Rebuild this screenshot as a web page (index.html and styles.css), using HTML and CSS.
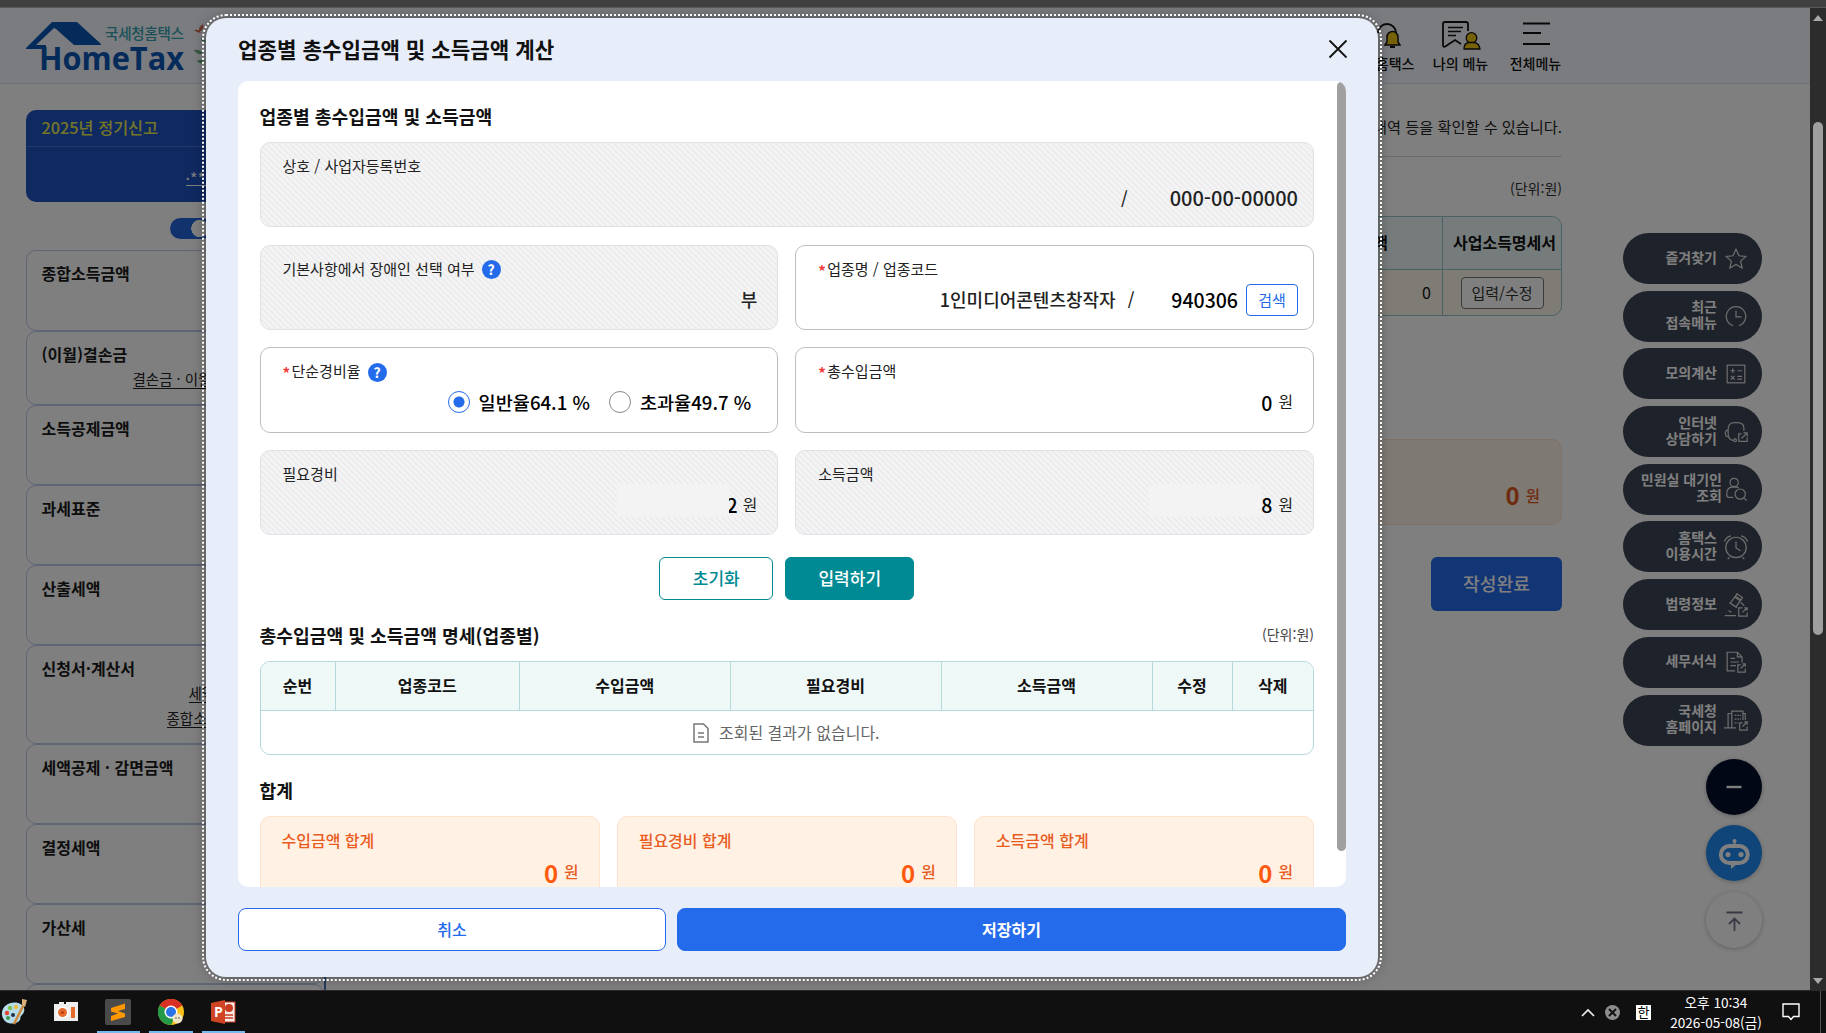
FILE: index.html
```html
<!DOCTYPE html>
<html lang="ko">
<head>
  <meta charset="UTF-8">
  <meta name="viewport" content="width=device-width, initial-scale=1.0">
  <title>업종별 총수입금액 및 소득금액 계산</title>
  <link rel="stylesheet" href="styles.css">
</head>
<body>
  <div class="browser-edge"></div>
  <div class="viewport">
    <div class="page">
      <header class="header">
        <svg class="logo" width="190" height="60" viewBox="0 0 190 60">
          <path d="M0 32 L26 6 H51 L75 28 V29 H48 L30 13 L28 12 L10 29 H20 V33 H0z" fill="#0a56b4"/>
          <text x="79" y="23" class="logo-kr" textLength="79">국세청홈택스</text>
          <text x="13" y="54" class="logo-en" textLength="145" lengthAdjust="spacingAndGlyphs">HomeTax</text>
          <path d="M168 14 q5 -1 7 3 q-4 0 -7 -3z M173 16 q-1 -5 4 -8 q2 5 -4 8z" fill="#d66a4a"/>
          <path d="M168 34 q6 -1 9 4 q-6 1 -9 -4z M171 45 q4 -3 8 1 q-5 3 -8 -1z M175 22 q3 0 5 4 q-5 0 -5 -4z" fill="#69ad7c"/>
        </svg>
        <nav class="top-nav">
          <a class="top-link">
            <svg width="40" height="32" viewBox="0 0 40 32">
              <path d="M12 14 a9 9 0 0 1 18 0" fill="none" stroke="#111" stroke-width="2"/>
              <path d="M19 26 h15 l-2 -3 v-5 a5.500 5.500 0 0 0 -11 0 v5z" fill="#ecc413" stroke="#111" stroke-width="1.500"/>
              <path d="M24 28 h5" stroke="#111" stroke-width="2"/>
            </svg>
            <span>My홈택스</span>
          </a>
          <a class="top-link">
            <svg width="40" height="32" viewBox="0 0 40 32">
              <path d="M27 12 V5 q0 -2 -2 -2 H4 q-2 0 -2 2 V26 q0 3 3 1 l9 -6 l6 4" fill="none" stroke="#111" stroke-width="1.800"/>
              <path d="M7 8.500 h15 M7 12.500 h13 M7 16.500 h8" stroke="#111" stroke-width="1.600"/>
              <circle cx="30.500" cy="19" r="5.300" fill="#ecc413" stroke="#111" stroke-width="1.300"/>
              <path d="M23 30 q0 -6 5 -6.500 h5 q5 0.500 6 6.500z" fill="#ecc413" stroke="#111" stroke-width="1.300"/>
            </svg>
            <span>나의 메뉴</span>
          </a>
          <a class="top-link">
            <svg width="40" height="32" viewBox="0 0 40 32">
              <path d="M7 4.500 h27 M7 14 h18 M7 25 h27" stroke="#111" stroke-width="1.900"/>
            </svg>
            <span>전체메뉴</span>
          </a>
        </nav>
      </header>

      <div class="body">
        <aside class="sidebar">
          <div class="report-card">
            <div class="report-title">2025년 정기신고</div>
            <div class="report-name"><span>·*****</span></div>
          </div>
          <div class="switch-row"><span class="switch"></span></div>
          <ul class="steps">
            <li class="step">종합소득금액</li>
            <li class="step step-short">(이월)결손금<div class="step-links links-loss"><a>결손금 · 이월결손금</a></div></li>
            <li class="step">소득공제금액</li>
            <li class="step">과세표준</li>
            <li class="step">산출세액</li>
            <li class="step step-tall">신청서·계산서<div class="step-links links-form"><a class="link-in">세액공제신청</a><a>종합소득세신고</a></div></li>
            <li class="step">세액공제 · 감면금액</li>
            <li class="step">결정세액</li>
            <li class="step">가산세</li>
            <li class="step"></li>
          </ul>
        </aside>

        <main class="content">
          <p class="guide">내역 등을 확인할 수 있습니다.</p>
          <div class="unit">(단위:원)</div>
          <div class="biz-table">
            <div class="biz-row biz-head"><span class="biz-amount">금액</span><span class="biz-detail">사업소득명세서</span></div>
            <div class="biz-row"><span class="biz-amount">0</span><span class="biz-detail"><button class="btn-edit">입력/수정</button></span></div>
          </div>
          <div class="total-box"><b>0</b><span>원</span></div>
          <button class="btn-done">작성완료</button>
        </main>
      </div>

      <div class="quick">
        <a class="quick-item"><span>즐겨찾기</span>
          <svg viewBox="0 0 28 28"><path d="M14 3.500 l3.200 7 7.300 .8 -5.500 5 1.600 7.400 -6.600 -3.800 -6.600 3.800 1.600 -7.400 -5.500 -5 7.300 -.8z"/></svg></a>
        <a class="quick-item"><span>최근<br>접속메뉴</span>
          <svg viewBox="0 0 28 28"><path d="M17 24.500 a10.500 10.500 0 1 0 -6 0 M14 8 v7 h6"/></svg></a>
        <a class="quick-item"><span>모의계산</span>
          <svg viewBox="0 0 28 28"><rect x="4.500" y="4.500" width="19" height="19"/><path d="M8 10.500 h5 M10.500 8 v5 M15.500 10.500 h5 M8.500 16 l4 4 M12.500 16 l-4 4 M15.500 16.500 h5 M15.500 19.500 h5"/></svg></a>
        <a class="quick-item"><span>인터넷<br>상담하기</span>
          <svg viewBox="0 0 28 28"><path d="M22.500 13 v-3 q0 -6 -7 -6 h-3 q-7 0 -7 7 v4 q0 8 6 8 M5.500 12 q-3 0 -3 3 q0 4 3 4"/><circle cx="13" cy="23" r="1.500"/><path d="M20 16 h-3 v8 h9 v-4 M20 21 l6 -6 M22 15 h4 v4"/></svg></a>
        <a class="quick-item quick-wide"><span>민원실 대기인<br>조회</span>
          <svg viewBox="0 0 28 28"><circle cx="12" cy="7" r="4.500"/><path d="M11 23 H6 q-2 0 -2 -3 q0 -8 6 -8 h4 q2 0 3 1"/><circle cx="18.500" cy="19.500" r="5.500"/><path d="M22.500 23.500 l3 3"/></svg></a>
        <a class="quick-item"><span>홈택스<br>이용시간</span>
          <svg viewBox="0 0 28 28"><circle cx="14" cy="14.500" r="11"/><path d="M14 8 v7 l5 3 M1.500 8 q2 -5 7 -6 M26.500 8 q-2 -5 -7 -6 M7 25 l-2 2 M21 25 l2 2"/></svg></a>
        <a class="quick-item"><span>법령정보</span>
          <svg viewBox="0 0 28 28"><path d="M15 2 l6 4 -1.500 2.500 -6 -4z M12.500 5.500 l6 4 -4.500 6.500 -6 -4z M7 11.500 l8 5.500 M19 11 l4 4 M2 25.500 h12 M6 20 l3 2"/><path d="M21 17 h-4 v9 h9 v-4 M21 22 l5 -5 M23 17 h3 v3"/></svg></a>
        <a class="quick-item"><span>세무서식</span>
          <svg viewBox="0 0 28 28"><path d="M13 23.500 H4.500 V3.500 h11 l5 5 v6 M15.500 3.500 v5 h5 M8 10 h5 M8 14 h9 M8 18 h6"/><path d="M19 17 h-3 v8 h8 v-4 M19 21 l5 -5 M21 16 h3 v3"/></svg></a>
        <a class="quick-item"><span>국세청<br>홈페이지</span>
          <svg viewBox="0 0 28 28"><path d="M1 22.500 h13 M5.500 22 V7 h4 M9.500 22 V4.500 h12 V14 M21.500 7 h2.500 v7"/><path d="M12.500 9 h7 M12.500 13 h7 M12.500 17 h4" stroke-dasharray="2 1"/><path d="M21 17 h-3 v8 h8 v-4 M21 21 l5 -5 M23 16 h3 v3"/></svg></a>
        <a class="round round-dark"><svg viewBox="0 0 56 56"><path d="M20.500 28 h15" stroke="#fff" stroke-width="2.400"/></svg></a>
        <a class="round round-chat">
          <svg viewBox="0 0 56 56"><rect x="14.800" y="21" width="27" height="17" rx="8.500" fill="none" stroke="#fff" stroke-width="4"/><circle cx="28.500" cy="16" r="2" fill="#fff"/><path d="M28.500 16 v4" stroke="#fff" stroke-width="2"/><circle cx="22" cy="29.500" r="2.600" fill="#fff"/><circle cx="35" cy="29.500" r="2.600" fill="#fff"/><path d="M25 39 v5 l6 -5z" fill="#fff"/></svg></a>
        <a class="round round-top"><svg viewBox="0 0 56 56"><path d="M20.500 20.500 h16 M28.500 39 v-11 M23 32 l5.500 -5.500 5.500 5.500" fill="none" stroke="#75758a" stroke-width="1.800"/></svg></a>
      </div>
      <div class="dim"></div>

      <section class="modal">
        <div class="modal-head">
          <h1>업종별 총수입금액 및 소득금액 계산</h1>
          <svg class="close" width="20" height="20" viewBox="0 0 20 20"><path d="M1.500 1.500 L18.500 18.500 M18.500 1.500 L1.500 18.500" stroke="#111" stroke-width="1.800"/></svg>
        </div>

        <div class="modal-body">
          <h2>업종별 총수입금액 및 소득금액</h2>
          <div class="form-grid">
            <div class="field field-full disabled">
              <div class="label">상호 / 사업자등록번호</div>
              <div class="value value-biz"><i class="slash">/</i><span class="num">000-00-00000</span></div>
            </div>
            <div class="field disabled">
              <div class="label">기본사항에서 장애인 선택 여부 <span class="help">?</span></div>
              <div class="value">부</div>
            </div>
            <div class="field">
              <div class="label"><em>*</em>업종명 / 업종코드</div>
              <div class="value value-code"><span>1인미디어콘텐츠창작자</span><i class="slash">/</i><span class="num">940306</span><button class="btn-search">검색</button></div>
            </div>
            <div class="field">
              <div class="label"><em>*</em>단순경비율 <span class="help">?</span></div>
              <div class="value value-radio">
                <span class="radio on"></span><span class="rate">일반율64.1 %</span>
                <span class="radio"></span><span class="rate">초과율49.7 %</span>
              </div>
            </div>
            <div class="field">
              <div class="label"><em>*</em>총수입금액</div>
              <div class="value"><span class="num">0</span><small>원</small></div>
            </div>
            <div class="field disabled">
              <div class="label">필요경비</div>
              <div class="value"><span class="num num-cut">2</span><span class="blank blank-over"></span><small>원</small></div>
            </div>
            <div class="field disabled">
              <div class="label">소득금액</div>
              <div class="value"><span class="blank"></span><span class="num">8</span><small>원</small></div>
            </div>
          </div>

          <div class="form-buttons">
            <button class="btn-reset">초기화</button>
            <button class="btn-enter">입력하기</button>
          </div>

          <div class="list-head">
            <h2>총수입금액 및 소득금액 명세(업종별)</h2>
            <span class="list-unit">(단위:원)</span>
          </div>
          <div class="list">
            <div class="list-row">
              <span>순번</span><span>업종코드</span><span>수입금액</span><span>필요경비</span><span>소득금액</span><span>수정</span><span>삭제</span>
            </div>
            <div class="list-empty">
              <svg width="16" height="20" viewBox="0 0 16 20"><path d="M1 1 h9.500 l4.500 4.500 v13.500 h-14z M5 10 h6 M5 14 h6" fill="none" stroke="#777" stroke-width="1.500"/></svg>
              조회된 결과가 없습니다.
            </div>
          </div>

          <h2 class="sum-title">합계</h2>
          <div class="sums">
            <div class="sum"><div>수입금액 합계</div><p><b>0</b>원</p></div>
            <div class="sum"><div>필요경비 합계</div><p><b>0</b>원</p></div>
            <div class="sum"><div>소득금액 합계</div><p><b>0</b>원</p></div>
          </div>
          <div class="thumb"></div>
        </div>

        <div class="modal-foot">
          <button class="btn-cancel">취소</button>
          <button class="btn-save">저장하기</button>
        </div>
      </section>
    </div>
    <div class="scrollbar">
      <span class="arrow-up"></span>
      <span class="scroll-thumb"></span>
      <span class="arrow-down"></span>
    </div>
  </div>

  <footer class="taskbar">
    <div class="apps">
      <div class="app app-paint">
        <svg width="28" height="28" viewBox="0 0 28 28"><path d="M2 17 C1 8 10 3 18 5 C25 7 26 13 22 17 C19 19 22 21 18 24 C10 28 3 24 2 17z" fill="#b7dcea"/><circle cx="7" cy="15" r="2.200" fill="#e2452f"/><circle cx="10" cy="10" r="2.200" fill="#7cc24e"/><circle cx="16" cy="9" r="2.200" fill="#f1bd3b"/><circle cx="8" cy="20" r="2" fill="#3a9a4c"/><circle cx="13" cy="17" r="2" fill="#234"/><path d="M25 4 L14 26" stroke="#cf8a3b" stroke-width="2.500"/><path d="M22 1 l5 1 -2 7 -3 -2z" fill="#d9b07a"/></svg>
      </div>
      <div class="app">
        <svg width="26" height="24" viewBox="0 0 26 24"><path d="M1 4 h5 v-2 h5 v2 h2 v-2 h12 v19 h-24z" fill="#eee"/><circle cx="9.500" cy="12.500" r="6" fill="#fff"/><circle cx="9.500" cy="12.500" r="4.500" fill="#e8692c"/><circle cx="9.500" cy="12.500" r="1.500" fill="#b53c12"/><rect x="18" y="7" width="4" height="11" fill="#e8692c"/></svg>
      </div>
      <div class="app running">
        <svg width="26" height="26" viewBox="0 0 26 26"><rect width="26" height="26" rx="2" fill="#4a4a4a"/><path d="M6 9 L20 4.500 V10 L13 12 L20 14.500 V18 L6 22 V17 L13 14.500 L6 12.500z" fill="#ff9800"/></svg>
      </div>
      <div class="app running">
        <svg width="26" height="26" viewBox="0 0 26 26"><circle cx="13" cy="13" r="13" fill="#fbc116"/><path d="M13 13 L1.700 6.500 A13 13 0 0 1 24.300 6.500z" fill="#d93025"/><path d="M1.700 6.500 A13 13 0 0 0 13 26 L18.500 16z" fill="#249a48"/><circle cx="13" cy="13" r="6.500" fill="#fff"/><circle cx="13" cy="13" r="5" fill="#2b72e8"/><circle cx="19.500" cy="19.500" r="5" fill="#f3e6c5"/><circle cx="18" cy="19" r=".7" fill="#333"/><circle cx="21" cy="19" r=".7" fill="#333"/></svg>
      </div>
      <div class="app running">
        <svg width="26" height="24" viewBox="0 0 26 24"><rect x="13" y="2" width="12" height="20" fill="#f8ece9" stroke="#c83b20"/><circle cx="19" cy="8" r="4" fill="#c83b20"/><path d="M15 15 h8 M15 18 h8" stroke="#c83b20" stroke-width="1.500"/><path d="M1 3 L15 0 V24 L1 21z" fill="#cf4424"/><text x="4" y="17" class="ppt">P</text></svg>
      </div>
    </div>
    <div class="tray">
      <svg width="14" height="9" viewBox="0 0 14 9"><path d="M1 8 L7 2 L13 8" fill="none" stroke="#eee" stroke-width="1.700"/></svg>
      <svg class="tray-x" width="15" height="15" viewBox="0 0 15 15"><circle cx="7.500" cy="7.500" r="7.500" fill="#8d8d8d"/><path d="M4 4 L11 11 M11 4 L4 11" stroke="#111" stroke-width="2"/></svg>
      <span class="ime">한</span>
      <div class="clock">오후 10:34<br>2026-05-08(금)</div>
      <svg class="notice" width="18" height="18" viewBox="0 0 18 18"><path d="M1 1 H17 V13.500 H11.500 L9 16.500 L6.500 13.500 H1z" fill="none" stroke="#fff" stroke-width="1.400"/></svg>
      <span class="peek"></span>
    </div>
  </footer>
</body>
</html>
```
FILE: styles.css
```css
* {
  box-sizing: border-box;
}
body {
  margin: 0;
  width: 1826px;
  height: 1033px;
  overflow: hidden;
  display: flex;
  flex-direction: column;
  font-family: "Noto Sans CJK KR", "Noto Sans", sans-serif;
  font-size: 16px;
  line-height: 1.2;
  color: #111;
}
h1, h2, p, ul {
  margin: 0;
  padding: 0;
}
button {
  font: inherit;
  padding: 0;
  background: #fff;
}
.browser-edge {
  height: 8px;
  background: #404040;
  border-bottom: 1px solid #5a5a5a;
}
.viewport {
  height: 982px;
  display: flex;
}
.page {
  position: relative;
  width: 1810px;
  overflow: hidden;
  background: #fff;
}

/* page header */
.header {
  height: 76px;
  display: flex;
  justify-content: space-between;
  background: #f7f8ff;
  border-bottom: 1px solid #dde3e6;
  padding: 0 243px 0 26px;
}
.logo {
  margin-top: 8px;
}
.logo-kr {
  font-size: 14.5px;
  font-weight: 500;
  fill: #35a3b2;
}
.logo-en {
  font-family: "Open Sans", sans-serif;
  font-size: 32px;
  font-weight: 700;
  fill: #0a56b4;
}
.top-nav {
  display: flex;
  gap: 12px;
  padding-top: 11px;
}
.top-link {
  width: 63px;
  display: flex;
  flex-direction: column;
  align-items: center;
  font-size: 14px;
  font-weight: 500;
  line-height: 20px;
  white-space: nowrap;
}
.top-link svg {
  margin-bottom: 2px;
}

.body {
  display: flex;
  justify-content: space-between;
  padding: 26px 248px 0 25.500px;
}

/* left steps */
.sidebar {
  width: 300px;
  height: 890px;
  border-right: 2px solid #4577c8;
}
.report-card {
  height: 92px;
  border-radius: 10px 0 0 10px;
  background: #1e53c2;
}
.report-title {
  height: 37px;
  padding-left: 16px;
  line-height: 35px;
  font-size: 16.3px;
  font-weight: 500;
  color: #ebeb50;
  border-bottom: 1px solid #4470cc;
}
.report-name {
  padding: 17px 0 0 160px;
  font-size: 16px;
  line-height: 22px;
  color: #fff;
}
.report-name span {
  display: inline-block;
  height: 22px;
  line-height: 28px;
  border-bottom: 1px solid #fff;
}
.switch-row {
  height: 48px;
  padding: 16px 0 0 144px;
}
.switch {
  display: block;
  width: 42px;
  height: 21px;
  border-radius: 11px;
  background: radial-gradient(circle at 30px 50%, #fff 8.5px, #2565dc 9px);
}
.steps {
  list-style: none;
}
.step {
  height: 80px;
  padding: 11px 0 0 15px;
  border: 1px solid #bccbe8;
  border-radius: 10px;
  line-height: 22px;
  font-size: 16px;
  font-weight: 700;
  color: #1a1a1a;
}
.step:first-child {
  height: 80.5px;
}
.step-short {
  height: 74px;
}
.step-tall {
  height: 99.500px;
}
.step-links {
  display: flex;
  flex-direction: column;
  align-items: flex-start;
  font-size: 14.5px;
  font-weight: 400;
  line-height: 19px;
  color: #222;
}
.step-links a {
  border-bottom: 1px solid #222;
}
.links-loss {
  padding: 4px 0 0 91px;
}
.links-form {
  gap: 5px;
  padding: 4px 0 0 125px;
}
.link-in {
  margin-left: 22px;
}

/* right content */
.content {
  width: 260px;
  display: flex;
  flex-direction: column;
  align-items: flex-end;
}
.guide {
  width: 100%;
  height: 47px;
  padding-top: 7px;
  text-align: right;
  white-space: nowrap;
  font-size: 15.2px;
  color: #222;
  border-bottom: 1px solid #dadada;
}
.unit {
  height: 59px;
  padding-top: 23px;
  font-size: 14px;
  color: #333;
}
.biz-table {
  width: 100%;
  height: 100px;
  border: 1px solid #92c4c8;
  border-radius: 0 10px 10px 0;
  overflow: hidden;
  background: #fff8ec;
}
.biz-row {
  height: 46px;
  display: flex;
}
.biz-head {
  height: 53px;
  background: #edf8f7;
  border-bottom: 1px solid #92c4c8;
  font-weight: 700;
}
.biz-amount {
  flex: 1;
  display: flex;
  justify-content: flex-end;
  align-items: center;
  padding-right: 11px;
}
.biz-head .biz-amount {
  padding-right: 54px;
}
.biz-detail {
  width: 119px;
  display: flex;
  justify-content: center;
  align-items: center;
  padding-left: 5px;
  border-left: 1px solid #92c4c8;
  white-space: nowrap;
}
.biz-row:last-child .biz-detail {
  padding-left: 0;
}
.btn-edit {
  width: 83px;
  height: 32px;
  border: 1px solid #777;
  border-radius: 4px;
  font-size: 15px;
  color: #333;
}
.total-box {
  width: 100%;
  height: 86px;
  margin-top: 123px;
  display: flex;
  justify-content: flex-end;
  align-items: center;
  gap: 6px;
  padding: 26px 21px 0 0;
  border: 1px solid #ffe3cf;
  border-radius: 10px;
  background: #fff2e6;
  color: #e0561c;
  font-size: 15.5px;
  font-weight: 500;
}
.total-box b {
  font-size: 24px;
  line-height: 28px;
}
.btn-done {
  width: 131px;
  height: 54px;
  margin-top: 31.500px;
  border: 0;
  border-radius: 6px;
  background: #246beb;
  color: #fff;
  font-size: 18.2px;
  font-weight: 500;
}

/* floating quick menu */
.quick {
  position: absolute;
  top: 225px;
  right: 48px;
  width: 139px;
  display: flex;
  flex-direction: column;
  align-items: flex-end;
  gap: 6.7px;
}
.quick-item {
  width: 139px;
  height: 51px;
  display: flex;
  justify-content: flex-end;
  align-items: center;
  gap: 6px;
  padding-right: 13px;
  border-radius: 26px;
  background: #3c4454;
  color: #fff;
  font-size: 14px;
  font-weight: 700;
  line-height: 16px;
  text-align: right;
  white-space: nowrap;
}
.quick-item span {
  margin-top: -4px;
}
.quick-wide {
  gap: 1px;
}
.quick-item svg {
  width: 26px;
  height: 26px;
  fill: none;
  stroke: #ddd;
  stroke-width: 1.3;
}
.round {
  width: 56px;
  height: 56px;
  border-radius: 50%;
  box-shadow: 0 1px 5px rgba(0, 0, 0, .25);
}
.round-dark {
  margin-top: 6.500px;
  background: #030f2b;
}
.round-chat {
  margin-top: 4px;
  background: #1e8af0;
}
.round-top {
  margin-top: 4px;
  background: #fff;
}

.dim {
  position: absolute;
  inset: 0;
  background: rgba(0, 0, 0, .5);
}

/* modal */
.modal {
  position: absolute;
  left: 206px;
  top: 10px;
  width: 1172px;
  height: 959px;
  display: flex;
  flex-direction: column;
  padding: 0 32px 26px;
  border-radius: 20px;
  background: #e8eef9;
  outline: 2px dotted #fff;
  outline-offset: 2px;
  box-shadow: 0 0 14px rgba(0, 0, 0, .4);
}
.modal-head {
  height: 63px;
  display: flex;
  justify-content: space-between;
  align-items: center;
}
.modal-head h1 {
  font-size: 21.2px;
  font-weight: 700;
  margin-top: -1px;
}
.close {
  margin: -2px -2px 0 0;
}
.modal-body {
  position: relative;
  height: 806px;
  overflow: hidden;
  padding: 22px 32px 0 21.500px;
  border-radius: 10px;
  background: #fff;
}
h2 {
  font-size: 18.2px;
  font-weight: 700;
  line-height: 26px;
}
.form-grid {
  display: grid;
  grid-template-columns: 1fr 1fr;
  gap: 17.5px 17px;
  margin-top: 13px;
}
.field {
  height: 85.2px;
  padding: 11px 20px 0 22px;
  border: 1px solid #bcbec2;
  border-radius: 10px;
}
.field-full {
  grid-column: 1 / 3;
}
.disabled {
  border-color: #dfe1e6;
  background: linear-gradient(45deg, #f3f3f4 30%, #ebebed 30% 50%, #f3f3f4 50% 80%, #ebebed 80%) 0 0 / 6px 6px;
}
.label {
  height: 24px;
  display: flex;
  align-items: center;
  font-size: 15px;
  color: #222;
}
.label em {
  width: 9px;
  font-style: normal;
  font-weight: 700;
  line-height: 10px;
  padding-top: 4px;
  color: #f03a3a;
}
.help {
  width: 19px;
  height: 19px;
  margin: 2px 0 0 7px;
  border-radius: 50%;
  background: #246beb;
  color: #fff;
  font-size: 14px;
  font-weight: 700;
  line-height: 19px;
  text-align: center;
}
.value {
  height: 28px;
  margin-top: 5px;
  display: flex;
  justify-content: flex-end;
  align-items: center;
  font-size: 18px;
  font-weight: 500;
  color: #222;
}
.num {
  font-size: 19.5px;
  font-weight: 500;
  color: #000;
}
.value small {
  margin-left: 6px;
  font-size: 15.8px;
  font-weight: 400;
}
.slash {
  font-size: 17px;
  font-style: normal;
}
.value-biz {
  margin-right: -5px;
  margin-top: 6px;
}
.value-biz .slash {
  margin-right: 42px;
}
.value-biz .num {
  font-size: 20px;
  color: #222;
}
.value-code {
  margin-right: -5px;
}
.value-code .slash {
  margin: 0 37px 0 12px;
}
.btn-search {
  width: 52px;
  height: 32px;
  margin-left: 8px;
  border: 1px solid #246beb;
  border-radius: 4px;
  font-size: 15px;
  font-weight: 400;
  color: #246beb;
}
.value-radio {
  margin-right: 6px;
  color: #000;
}
.radio {
  width: 22px;
  height: 22px;
  border: 1px solid #888;
  border-radius: 50%;
}
.radio.on {
  border-color: #246beb;
  background: radial-gradient(circle, #246beb 5px, #fff 6px);
}
.rate {
  margin-left: 9px;
  font-size: 18.6px;
}
.rate + .radio {
  margin-left: 19px;
}
.blank {
  width: 112px;
  height: 33px;
  margin-top: -10px;
  background: #f3f3f4;
}
/* covers the left edge of the digit */
.num-cut {
  margin-right: -1px;
}
.blank-over {
  margin-left: -120px;
  margin-right: 8px;
}

.form-buttons {
  display: flex;
  justify-content: center;
  gap: 12px;
  margin-top: 21.500px;
}
.form-buttons button {
  height: 43px;
  border: 1px solid #008a94;
  border-radius: 6px;
  font-size: 17px;
  font-weight: 500;
}
.btn-reset {
  width: 114px;
  color: #008a94;
}
.form-buttons .btn-enter {
  width: 129px;
  background: #008a94;
  color: #fff;
}
.list-head {
  display: flex;
  justify-content: space-between;
  align-items: center;
  margin-top: 22px;
}
.list-unit {
  font-size: 14px;
  color: #444;
}
.list {
  height: 94px;
  margin-top: 13px;
  border: 1px solid #b5d9db;
  border-radius: 10px;
  overflow: hidden;
}
.list-row {
  height: 49.500px;
  display: grid;
  grid-template-columns: 75px 184.500px 210.500px 211px 211px 80px 1fr;
  background: #eef8f7;
  border-bottom: 1px solid #b5d9db;
}
.list-row span {
  display: flex;
  justify-content: center;
  align-items: center;
  padding-bottom: 1px;
  border-right: 1px solid #b5d9db;
  font-weight: 700;
}
.list-row span:last-child {
  border-right: 0;
}
.list-empty {
  height: 43px;
  display: flex;
  justify-content: center;
  align-items: center;
  gap: 10px;
  padding-right: 1px;
  color: #666;
}
.sum-title {
  margin-top: 22px;
}
.sums {
  display: grid;
  grid-template-columns: repeat(3, 1fr);
  gap: 17px;
  margin-top: 13px;
}
.sum {
  height: 86px;
  padding: 14px 20px 0 21px;
  border: 1px solid #ffe3cf;
  border-radius: 10px;
  background: #fff1e4;
  color: #e95c1f;
  font-weight: 500;
}
.sum p {
  display: flex;
  justify-content: flex-end;
  align-items: center;
  gap: 6px;
  margin-top: 8px;
  font-size: 15.8px;
}
.sum b {
  font-size: 24px;
  line-height: 30px;
  color: #ff5a0f;
}
.thumb {
  position: absolute;
  right: 0;
  top: 1px;
  width: 9px;
  height: 769px;
  border-radius: 5px;
  background: #a0a0a0;
}
.modal-foot {
  display: flex;
  gap: 11px;
  margin-top: 21px;
}
.modal-foot button {
  height: 43px;
  border: 1px solid #246beb;
  border-radius: 8px;
  font-weight: 500;
}
.btn-cancel {
  width: 428px;
  color: #246beb;
}
.modal-foot .btn-save {
  flex: 1;
  background: #246beb;
  color: #fff;
  font-weight: 700;
}

/* window scrollbar */
.scrollbar {
  width: 16px;
  display: flex;
  flex-direction: column;
  align-items: center;
  background: #2c2c2c;
}
.arrow-up, .arrow-down {
  border: 5px solid transparent;
}
.arrow-up {
  margin-top: 2px;
  border-bottom: 6px solid #a9a9a9;
}
.arrow-down {
  margin-top: auto;
  margin-bottom: 1px;
  border-top: 6px solid #a9a9a9;
}
.scroll-thumb {
  width: 10px;
  height: 513px;
  margin-top: 101px;
  border-radius: 5px;
  background: #9f9f9f;
}

/* taskbar */
.taskbar {
  height: 43px;
  display: flex;
  justify-content: space-between;
  background: #101010;
  border-top: 1px solid #2a2a2a;
  color: #fff;
}
.apps {
  display: flex;
  gap: 9px;
  margin-left: -8px;
}
.app {
  width: 43.4px;
  display: flex;
  justify-content: center;
  align-items: center;
  padding-top: 1px;
  border-bottom: 2px solid transparent;
}
.running {
  border-bottom-color: #76b9ed;
}
.ppt {
  font-family: "Open Sans", sans-serif;
  font-size: 14px;
  font-weight: 700;
  fill: #fff;
}
.tray {
  display: flex;
  align-items: center;
}
.tray-x {
  margin-left: 10px;
}
.ime {
  width: 15px;
  height: 15px;
  margin: 0 19px 0 16px;
  background: #fff;
  color: #000;
  font-size: 13px;
  line-height: 14px;
  text-align: center;
}
.clock {
  width: 92px;
  font-size: 13.6px;
  line-height: 20px;
  text-align: center;
  white-space: nowrap;
}
.notice {
  margin: 0 20px 0 20px;
}
.peek {
  width: 6px;
  height: 42px;
  border-left: 1px solid #555;
}
```
